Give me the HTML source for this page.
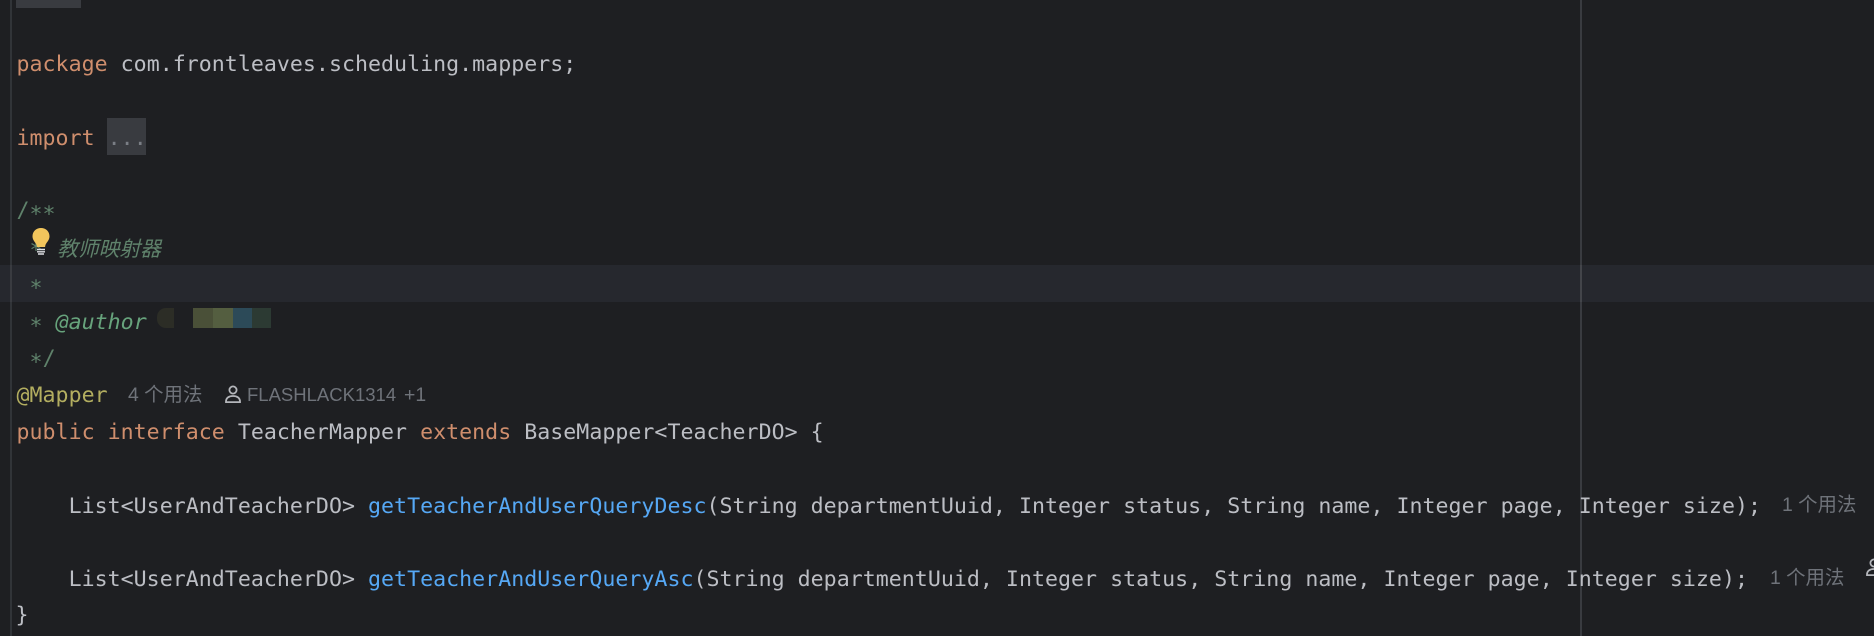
<!DOCTYPE html>
<html><head><meta charset="utf-8">
<style>
html,body{margin:0;padding:0;background:#1E1F22}
#p{position:relative;width:1874px;height:636px;overflow:hidden;background:#1E1F22}
.l{position:absolute;left:16.5px;height:37px;line-height:37px;white-space:pre;font-family:"DejaVu Sans Mono","Liberation Mono",monospace;font-size:21.6px;letter-spacing:.018px;color:#BCBEC4}
.k{color:#CF8E6D}.m{color:#56A8F5}.a{color:#B3AE60}.d{color:#5F826B}
.t{color:#67A37C;font-style:italic}
.s{position:relative;top:3.5px}
.c{font-family:"Noto Sans CJK SC","Liberation Sans",sans-serif;font-style:italic;font-size:20.8px;color:#5F826B;position:absolute;white-space:pre;line-height:30px;height:30px}
.h{position:absolute;white-space:pre;font-family:"Liberation Sans","Noto Sans CJK SC",sans-serif;font-size:19.4px;color:#6F737A;line-height:26px;height:26px}
.b{position:absolute}
</style></head><body><div id="p">
<div class="b" style="left:10px;top:0;width:2px;height:636px;background:#313438"></div>
<div class="b" style="left:1580px;top:0;width:2px;height:636px;background:#393B40"></div>
<div class="b" style="left:16px;top:0;width:65px;height:8px;background:#393B40"></div>
<div class="b" style="left:0;top:265px;width:1874px;height:37px;background:#26282E"></div>
<div class="b" style="left:10px;top:265px;width:2px;height:37px;background:#393B40"></div>
<div class="b" style="left:1580px;top:265px;width:2px;height:37px;background:#43454A"></div>
<div class="b" style="left:107px;top:118px;width:39px;height:37px;background:#393B40"></div>

<div class="l" style="top:46px"><span class="k">package</span> com.frontleaves.scheduling.mappers;</div>
<div class="l" style="top:120px"><span class="k">import</span> <span style="color:#7A7E85">...</span></div>
<div class="l d" style="top:192px">/<span class="s">**</span></div>
<div class="l d" style="top:228px"> <span class="s">*</span></div>
<div class="c" style="left:57px;top:232px">教师映射器</div>
<div class="l d" style="top:266px"> <span class="s">*</span></div>
<div class="l d" style="top:304px"> <span class="s">*</span> <span class="t">@author</span></div>
<div class="l d" style="top:340px"> <span class="s">*</span>/</div>
<div class="l a" style="top:377px">@Mapper</div>
<div class="h" style="left:128px;top:382px">4 个用法</div>
<div class="h" style="left:247px;top:382px;font-size:18.5px">FLASHLACK1314</div>
<div class="h" style="left:404px;top:382px">+1</div>
<div class="l" style="top:414px"><span class="k">public interface</span> TeacherMapper <span class="k">extends</span> BaseMapper&lt;TeacherDO&gt; {</div>
<div class="l" style="top:488px">    List&lt;UserAndTeacherDO&gt; <span class="m">getTeacherAndUserQueryDesc</span>(String departmentUuid, Integer status, String name, Integer page, Integer size);</div>
<div class="h" style="left:1782px;top:492px">1 个用法</div>
<div class="l" style="top:561px">    List&lt;UserAndTeacherDO&gt; <span class="m">getTeacherAndUserQueryAsc</span>(String departmentUuid, Integer status, String name, Integer page, Integer size);</div>
<div class="h" style="left:1770px;top:565px">1 个用法</div>
<div class="l" style="top:597px;left:15.5px">}</div>

<svg class="b" style="left:225px;top:385px" width="16" height="19" viewBox="0 0 16 19" fill="none" stroke="#B4B6BB" stroke-width="1.8"><circle cx="8" cy="5" r="3.6"/><path d="M1 16.500c0-3.600 3-5.500 7-5.500s7 1.900 7 5.500v.6H1z"/></svg>
<svg class="b" style="left:1866px;top:558px" width="16" height="19" viewBox="0 0 16 19" fill="none" stroke="#B4B6BB" stroke-width="1.8"><circle cx="8" cy="5" r="3.6"/><path d="M1 16.500c0-3.600 3-5.500 7-5.500s7 1.900 7 5.500v.6H1z"/></svg>

<svg class="b" style="left:29px;top:226px" width="24" height="30" viewBox="0 0 24 30"><path d="M12 2c-5 0-8.500 3.700-8.500 8.300 0 3.400 2 5.300 3.300 7.200.8 1.200 1 2.300 1.100 3.500h8.200c.1-1.200.3-2.300 1.100-3.500 1.300-1.900 3.300-3.800 3.300-7.200C20.500 5.700 17 2 12 2z" fill="#F2C55C"/><path d="M8 23.500h8M8 25.800h8M9 28h6" stroke="#DFE1E5" stroke-width="1.400" fill="none"/></svg>

<div class="b" style="left:157px;top:308px;width:17px;height:20px;background:#2C2D26;border-radius:9px 0 0 9px"></div>
<div class="b" style="left:193px;top:308px;width:20px;height:20px;background:#4A5038"></div>
<div class="b" style="left:213px;top:308px;width:20px;height:20px;background:#545E40"></div>
<div class="b" style="left:233px;top:308px;width:19px;height:20px;background:#2C4A58"></div>
<div class="b" style="left:252px;top:308px;width:19px;height:20px;background:#2C3A33"></div>
</div></body></html>
